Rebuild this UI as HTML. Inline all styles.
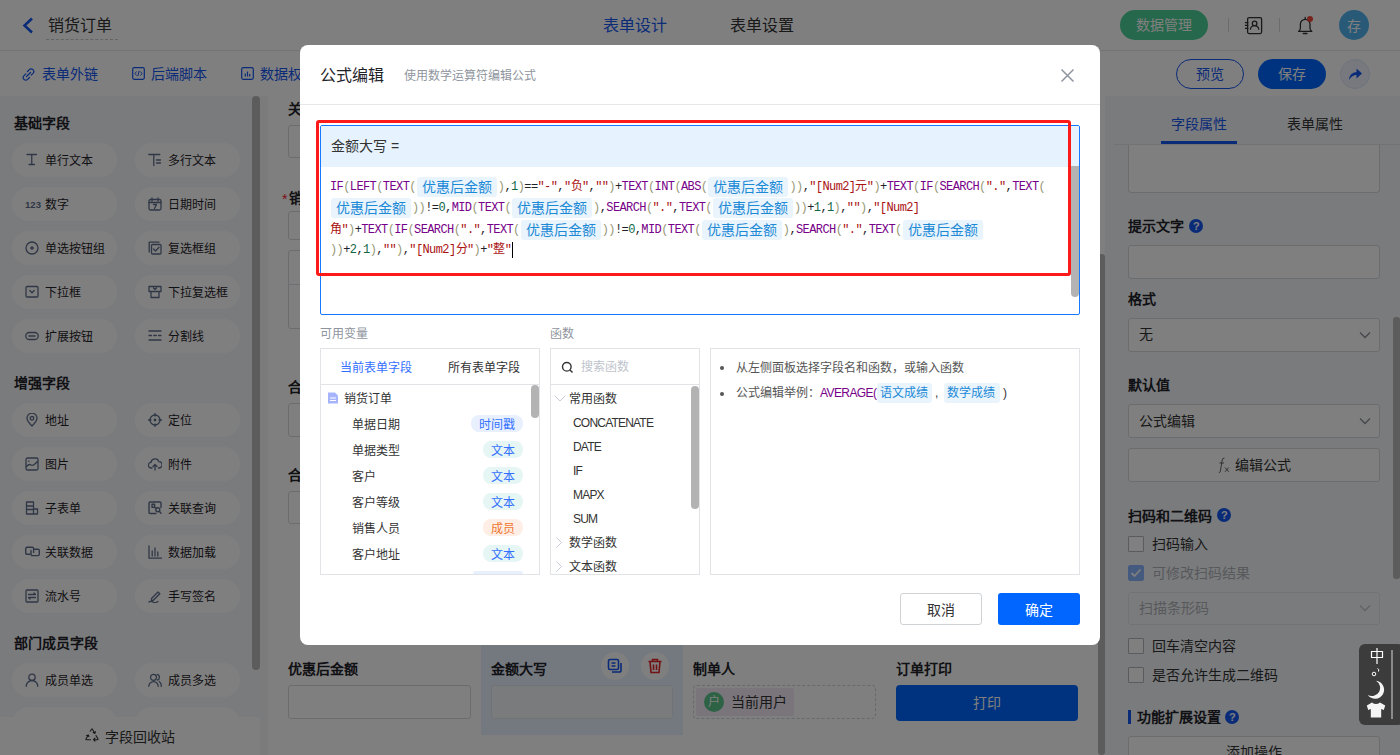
<!DOCTYPE html>
<html lang="zh-CN">
<head>
<meta charset="utf-8">
<style>
*{box-sizing:border-box;margin:0;padding:0}
html,body{width:1400px;height:755px;overflow:hidden;background:#fff;font-family:"Liberation Sans",sans-serif;color:#1f2329}
.a{position:absolute}
.t{position:absolute;white-space:nowrap;line-height:1}
/* header */
#hdr{left:0;top:0;width:1400px;height:51px;background:#fff;border-bottom:1px solid #e8e8e8}
#tb{left:0;top:51px;width:1400px;height:45px;background:#fff}
/* left */
#lp{left:0;top:96px;width:260px;height:659px;background:#f5f7fb}
.pill{position:absolute;width:105px;height:34px;border-radius:17px;background:#fff}
.pill span{position:absolute;left:33px;top:11px;font-size:12px;line-height:14px;white-space:nowrap;color:#1f2329}
.pill svg{position:absolute;left:13px;top:10px}
.sec{position:absolute;left:14px;font-size:14px;font-weight:bold;line-height:16px;color:#1f2329}
/* canvas */
#cv{left:268px;top:96px;width:837px;height:659px;background:#fff}
.lbl{position:absolute;font-size:14px;font-weight:bold;line-height:16px;white-space:nowrap}
.inp{position:absolute;border:1px solid #d6d8db;border-radius:3px;background:#fff}
/* right */
#rp{left:1105px;top:96px;width:295px;height:659px;background:#f5f7fb}
#mask{left:0;top:0;width:1400px;height:755px;background:rgba(0,0,0,0.5)}
/* modal */
#modal{left:300px;top:45px;width:800px;height:600px;background:#fff;border-radius:8px;overflow:hidden}
.mono{font-family:"Liberation Mono",monospace;font-size:12px;letter-spacing:-0.6px}
.fn{color:#770088}.br{color:#999977}.nm{color:#116644}.st{color:#aa1111}.op{color:#1f2329}
.chip{display:inline-block;position:relative;height:20px;line-height:20px;padding:0 5px;margin:0 1px;background:#e9f4fd;color:#1d8ad6;border-radius:3px;font-family:"Liberation Sans",sans-serif;font-size:14px;letter-spacing:0;vertical-align:middle}
.cl{position:absolute;left:330px;white-space:nowrap;height:20px;line-height:20px}
</style>
</head>
<body>
<!-- ===== HEADER ===== -->
<div id="hdr" class="a"></div>
<svg class="a" style="left:22px;top:17px" width="12" height="17" viewBox="0 0 12 17"><path d="M10 1.5 L2.5 8.5 L10 15.5" fill="none" stroke="#1456f0" stroke-width="2.6"/></svg>
<div class="t" style="left:48px;top:18px;font-size:16px;color:#333">销货订单</div>
<div class="a" style="left:46px;top:39px;width:72px;border-top:1px dashed #c8c8c8"></div>
<div class="t" style="left:603px;top:18px;font-size:16px;color:#1456f0">表单设计</div>
<div class="t" style="left:730px;top:18px;font-size:16px;color:#333">表单设置</div>
<div class="a" style="left:1120px;top:10px;width:88px;height:30px;border-radius:15px;background:#4cd096"></div>
<div class="t" style="left:1136px;top:18px;font-size:14px;color:#fff">数据管理</div>
<div class="a" style="left:1228px;top:18px;width:1px;height:14px;background:#d8d8d8"></div>
<svg class="a" style="left:1244px;top:16px" width="20" height="19" viewBox="0 0 20 19"><rect x="3.6" y="1.6" width="14" height="16" rx="1.5" fill="none" stroke="#333" stroke-width="1.3"/><circle cx="10.6" cy="7.4" r="2.3" fill="none" stroke="#333" stroke-width="1.3"/><path d="M6.4 13.7A4.2 4.1 0 0 1 14.8 13.7" fill="none" stroke="#333" stroke-width="1.3"/><path d="M0.9 6.6h3.5M0.9 9.4h3.5M0.9 12.3h3.5" stroke="#333" stroke-width="1.2"/></svg>
<div class="a" style="left:1279px;top:18px;width:1px;height:14px;background:#d8d8d8"></div>
<svg class="a" style="left:1296px;top:15px" width="19" height="21" viewBox="0 0 19 21"><path d="M2.6 16.4Q4.4 15.4 4.4 13V9.2A4.8 4.8 0 0 1 14 9.2V13Q14 15.4 15.8 16.4Z" fill="none" stroke="#333" stroke-width="1.3" stroke-linejoin="round"/><path d="M9.2 2.3V4.2M7.3 18.5H11" stroke="#333" stroke-width="1.3" stroke-linecap="round"/><circle cx="14" cy="3.9" r="3" fill="#f04438"/></svg>
<div class="a" style="left:1339px;top:10px;width:30px;height:30px;border-radius:15px;background:#50b4f0"></div>
<div class="t" style="left:1347px;top:19px;font-size:14px;color:#fff">存</div>
<div id="tb" class="a"></div>
<svg class="a" style="left:22px;top:68px" width="13" height="13" viewBox="0 0 13 13"><path d="M5.5 3.5 L7.3 1.7 a2.6 2.6 0 0 1 3.7 3.7 L9.2 7.2 M7.5 9.5 L5.7 11.3 a2.6 2.6 0 0 1 -3.7 -3.7 L3.8 5.8 M4.5 8.5 L8.5 4.5" fill="none" stroke="#1456f0" stroke-width="1.2" stroke-linecap="round"/></svg>
<div class="t" style="left:42px;top:67px;font-size:14px;color:#1456f0">表单外链</div>
<svg class="a" style="left:132px;top:67px" width="13" height="13" viewBox="0 0 13 13"><rect x="0.7" y="0.7" width="11.6" height="11.6" rx="1.5" fill="none" stroke="#1456f0" stroke-width="1.2"/><path d="M4.5 4.5 L3 6.5 L4.5 8.5 M8.5 4.5 L10 6.5 L8.5 8.5 M7.2 3.8 L5.8 9.2" fill="none" stroke="#1456f0" stroke-width="1"/></svg>
<div class="t" style="left:151px;top:67px;font-size:14px;color:#1456f0">后端脚本</div>
<svg class="a" style="left:241px;top:67px" width="13" height="13" viewBox="0 0 13 13"><rect x="0.7" y="0.7" width="11.6" height="11.6" rx="1.5" fill="none" stroke="#1456f0" stroke-width="1.2"/><path d="M4.3 9.5V6.5M6.5 9.5V4.5M8.7 9.5V7" stroke="#1456f0" stroke-width="1.2"/></svg>
<div class="t" style="left:260px;top:67px;font-size:14px;color:#1456f0">数据权限</div>
<div class="a" style="left:1176px;top:59px;width:68px;height:30px;border-radius:15px;border:1px solid #1456f0;background:#fff"></div>
<div class="t" style="left:1196px;top:67px;font-size:14px;color:#1456f0">预览</div>
<div class="a" style="left:1258px;top:59px;width:68px;height:30px;border-radius:15px;background:#0066ff"></div>
<div class="t" style="left:1278px;top:67px;font-size:14px;color:#fff">保存</div>
<div class="a" style="left:1340px;top:59px;width:30px;height:30px;border-radius:15px;background:#eef3fd;border:1px solid #dde6f7"></div>
<svg class="a" style="left:1347px;top:66px" width="16" height="16" viewBox="0 0 16 16"><path d="M2 14 Q2.5 6.5 9.5 6 V2.5 L15 7.5 L9.5 12.5 V9 Q5 9 2 14Z" fill="#1456f0"/></svg>
<div id="lp" class="a"></div>
<div class="sec" style="top:115px">基础字段</div>
<div class="sec" style="top:375px">增强字段</div>
<div class="sec" style="top:635px">部门成员字段</div>
<div class="pill" style="left:12px;top:143px"><svg width="14" height="14" viewBox="0 0 14 14"><path d="M2 1.5h9.5M6.75 1.5v10M4 11.5h5.5" fill="none" stroke="#5f6f8c" stroke-width="1.3" stroke-linecap="round" stroke-linejoin="round" stroke-width="1.6"/></svg><span>单行文本</span></div>
<div class="pill" style="left:135px;top:143px"><svg width="14" height="14" viewBox="0 0 14 14"><path d="M0.8 1.5h11M5.8 1.5v11M8.5 7h4M8.5 10h4" fill="none" stroke="#5f6f8c" stroke-width="1.3" stroke-linecap="round" stroke-linejoin="round" stroke-width="1.4"/></svg><span>多行文本</span></div>
<div class="pill" style="left:12px;top:187px"><svg width="16" height="14" viewBox="0 0 16 14"><text x="0" y="11" font-family="Liberation Sans" font-weight="bold" font-size="9.6" fill="#5f6f8c">123</text></svg><span>数字</span></div>
<div class="pill" style="left:135px;top:187px"><svg width="14" height="14" viewBox="0 0 14 14"><rect x="1" y="2.5" width="12" height="10.5" rx="1.5" fill="none" stroke="#5f6f8c" stroke-width="1.3" stroke-linecap="round" stroke-linejoin="round"/><path d="M1 5.5h12M4 1v3M10 1v3M5.5 7.5h3L6.5 11.5" fill="none" stroke="#5f6f8c" stroke-width="1.3" stroke-linecap="round" stroke-linejoin="round"/></svg><span>日期时间</span></div>
<div class="pill" style="left:12px;top:231px"><svg width="14" height="14" viewBox="0 0 14 14"><circle cx="7" cy="7" r="6" fill="none" stroke="#5f6f8c" stroke-width="1.3" stroke-linecap="round" stroke-linejoin="round"/><circle cx="7" cy="7" r="1.7" fill="#5f6f8c"/></svg><span>单选按钮组</span></div>
<div class="pill" style="left:135px;top:231px"><svg width="14" height="14" viewBox="0 0 14 14"><path d="M1.2 11V1.2H11" fill="none" stroke="#5f6f8c" stroke-width="1.3" stroke-linecap="round" stroke-linejoin="round"/><rect x="3.5" y="3.5" width="9.5" height="9.5" rx="1" fill="none" stroke="#5f6f8c" stroke-width="1.3" stroke-linecap="round" stroke-linejoin="round"/><path d="M5.5 8l2 2 3.5-3.8" fill="none" stroke="#5f6f8c" stroke-width="1.3" stroke-linecap="round" stroke-linejoin="round"/></svg><span>复选框组</span></div>
<div class="pill" style="left:12px;top:275px"><svg width="14" height="14" viewBox="0 0 14 14"><rect x="1" y="1.5" width="12" height="10.5" rx="1.2" fill="none" stroke="#5f6f8c" stroke-width="1.3" stroke-linecap="round" stroke-linejoin="round"/><path d="M4.8 5.5l2.2 2.2 2.2-2.2" fill="none" stroke="#5f6f8c" stroke-width="1.3" stroke-linecap="round" stroke-linejoin="round"/></svg><span>下拉框</span></div>
<div class="pill" style="left:135px;top:275px"><svg width="14" height="14" viewBox="0 0 14 14"><path d="M1 1.5h12v5H1zM3 6.5v6h8v-6M5.5 3l1.5 1.5L8.5 3" fill="none" stroke="#5f6f8c" stroke-width="1.3" stroke-linecap="round" stroke-linejoin="round"/></svg><span>下拉复选框</span></div>
<div class="pill" style="left:12px;top:319px"><svg width="14" height="14" viewBox="0 0 14 14"><rect x="0.8" y="3.5" width="12.4" height="7" rx="3.5" fill="none" stroke="#5f6f8c" stroke-width="1.3" stroke-linecap="round" stroke-linejoin="round"/><path d="M4 7h6" fill="none" stroke="#5f6f8c" stroke-width="1.3" stroke-linecap="round" stroke-linejoin="round"/></svg><span>扩展按钮</span></div>
<div class="pill" style="left:135px;top:319px"><svg width="14" height="14" viewBox="0 0 14 14"><path d="M1 2h12M1 6.5h2.5M5.8 6.5h2.5M10.5 6.5h2.5M1 11h12" fill="none" stroke="#5f6f8c" stroke-width="1.3" stroke-linecap="round" stroke-linejoin="round"/></svg><span>分割线</span></div>
<div class="pill" style="left:12px;top:403px"><svg width="14" height="14" viewBox="0 0 14 14"><path d="M7 13C3.5 9.5 2 7.3 2 5.2a5 5 0 0 1 10 0c0 2.1-1.5 4.3-5 7.8z" fill="none" stroke="#5f6f8c" stroke-width="1.3" stroke-linecap="round" stroke-linejoin="round"/><circle cx="7" cy="5.3" r="1.8" fill="none" stroke="#5f6f8c" stroke-width="1.3" stroke-linecap="round" stroke-linejoin="round"/></svg><span>地址</span></div>
<div class="pill" style="left:135px;top:403px"><svg width="14" height="14" viewBox="0 0 14 14"><circle cx="7" cy="7" r="5" fill="none" stroke="#5f6f8c" stroke-width="1.3" stroke-linecap="round" stroke-linejoin="round"/><circle cx="7" cy="7" r="1.4" fill="#5f6f8c"/><path d="M7 0.5v2.5M7 11v2.5M0.5 7H3M11 7h2.5" fill="none" stroke="#5f6f8c" stroke-width="1.3" stroke-linecap="round" stroke-linejoin="round"/></svg><span>定位</span></div>
<div class="pill" style="left:12px;top:447px"><svg width="14" height="14" viewBox="0 0 14 14"><rect x="1" y="1" width="12" height="12" rx="1.5" fill="none" stroke="#5f6f8c" stroke-width="1.3" stroke-linecap="round" stroke-linejoin="round"/><path d="M1.5 9.5Q4 6.5 6 8T12.5 4.5M3.5 4.2h.5" fill="none" stroke="#5f6f8c" stroke-width="1.3" stroke-linecap="round" stroke-linejoin="round"/></svg><span>图片</span></div>
<div class="pill" style="left:135px;top:447px"><svg width="14" height="14" viewBox="0 0 14 14"><path d="M4 11H3.3a2.8 2.8 0 0 1-.3-5.6A4 4 0 0 1 10.8 4.6 2.8 2.8 0 0 1 11 11h-.5M7 13V7.5M5 9.5l2-2 2 2" fill="none" stroke="#5f6f8c" stroke-width="1.3" stroke-linecap="round" stroke-linejoin="round"/></svg><span>附件</span></div>
<div class="pill" style="left:12px;top:491px"><svg width="14" height="14" viewBox="0 0 14 14"><path d="M1.5 1h7v12h-7zM1.5 5h7M1.5 8.5h7M8.5 8h4v5h-4" fill="none" stroke="#5f6f8c" stroke-width="1.3" stroke-linecap="round" stroke-linejoin="round"/></svg><span>子表单</span></div>
<div class="pill" style="left:135px;top:491px"><svg width="14" height="14" viewBox="0 0 14 14"><path d="M8 12.5H2.2A1.2 1.2 0 0 1 1 11.3V2.2A1.2 1.2 0 0 1 2.2 1h9.6A1.2 1.2 0 0 1 13 2.2V6.5" fill="none" stroke="#5f6f8c" stroke-width="1.4" stroke-linecap="round" stroke-linejoin="round"/><rect x="4" y="3.3" width="2.6" height="3" fill="none" stroke="#5f6f8c" stroke-width="1.4" stroke-linecap="round" stroke-linejoin="round"/><circle cx="9.8" cy="8.8" r="2" fill="none" stroke="#5f6f8c" stroke-width="1.4" stroke-linecap="round" stroke-linejoin="round"/><path d="M11.3 10.3l1.7 1.9M6.6 6.3l1.7 1" fill="none" stroke="#5f6f8c" stroke-width="1.4" stroke-linecap="round" stroke-linejoin="round"/></svg><span>关联查询</span></div>
<div class="pill" style="left:12px;top:535px"><svg width="15" height="14" viewBox="0 0 15 14"><path d="M5 9.3H2a1.3 1.3 0 0 1-1.3-1.3V3.6A1.3 1.3 0 0 1 2 2.3h5.3a1.3 1.3 0 0 1 1.3 1.3V7.5" fill="none" stroke="#5f6f8c" stroke-width="1.4" stroke-linecap="round" stroke-linejoin="round"/><path d="M9.5 4.2h3.5a1.3 1.3 0 0 1 1.3 1.3v3.8a1.3 1.3 0 0 1-1.3 1.3H7.3A1.3 1.3 0 0 1 6 9.3V5.5" fill="none" stroke="#5f6f8c" stroke-width="1.4" stroke-linecap="round" stroke-linejoin="round"/></svg><span>关联数据</span></div>
<div class="pill" style="left:135px;top:535px"><svg width="14" height="14" viewBox="0 0 14 14"><path d="M1 0.8v12.4h12.5M4.2 11V6M7 11V3M9.8 11V7" fill="none" stroke="#5f6f8c" stroke-width="1.3" stroke-linecap="round" stroke-linejoin="round"/></svg><span>数据加载</span></div>
<div class="pill" style="left:12px;top:579px"><svg width="14" height="14" viewBox="0 0 14 14"><rect x="1" y="1" width="12" height="12" rx="1" fill="none" stroke="#5f6f8c" stroke-width="1.3" stroke-linecap="round" stroke-linejoin="round"/><path d="M3.5 5.5h7L9 4M10.5 8.5h-7L5 10" fill="none" stroke="#5f6f8c" stroke-width="1.3" stroke-linecap="round" stroke-linejoin="round"/></svg><span>流水号</span></div>
<div class="pill" style="left:135px;top:579px"><svg width="14" height="14" viewBox="0 0 14 14"><path d="M3.5 9.5l6.5-6.5 1.8 1.8-6.5 6.5H3.5zM1 13q2-1.5 4 0t5-.5" fill="none" stroke="#5f6f8c" stroke-width="1.3" stroke-linecap="round" stroke-linejoin="round"/></svg><span>手写签名</span></div>
<div class="pill" style="left:12px;top:663px"><svg width="14" height="14" viewBox="0 0 14 14"><circle cx="7" cy="4.3" r="3.2" fill="none" stroke="#5f6f8c" stroke-width="1.3" stroke-linecap="round" stroke-linejoin="round"/><path d="M1.2 13.3a5.8 5.8 0 0 1 11.6 0" fill="none" stroke="#5f6f8c" stroke-width="1.3" stroke-linecap="round" stroke-linejoin="round"/></svg><span>成员单选</span></div>
<div class="pill" style="left:135px;top:663px"><svg width="14" height="14" viewBox="0 0 14 14"><circle cx="5.5" cy="4.3" r="3" fill="none" stroke="#5f6f8c" stroke-width="1.3" stroke-linecap="round" stroke-linejoin="round"/><path d="M0.8 13.3a4.7 4.7 0 0 1 9.4 0M9.2 1.4a3 3 0 0 1 0 5.8M11.2 8.5a5 5 0 0 1 2 4.8" fill="none" stroke="#5f6f8c" stroke-width="1.3" stroke-linecap="round" stroke-linejoin="round"/></svg><span>成员多选</span></div>
<div class="pill" style="left:12px;top:707px"></div>
<div class="pill" style="left:135px;top:707px"></div>
<div class="a" style="left:252px;top:96px;width:8px;height:574px;border-radius:4px;background:#b8b8b8"></div>
<div class="a" style="left:0;top:717px;width:260px;height:38px;background:#fff"></div>
<svg class="a" style="left:85px;top:728px" width="14" height="15" viewBox="0 0 14 15"><path d="M5.2 3.2L6.6 1.2Q7 .6 7.4 1.2l2.4 4M8.2 4.6l1.7.8.4-1.8M11 7.5l1.9 3.3q.3.7-.4.9H8.5M10 10.2l-1.5 1.5 1.5 1.4M5.5 11.7H1.5q-.8-.1-.4-.9l2.2-3.8M1.6 7.5l1.7-.6.6 1.7" fill="none" stroke="#333" stroke-width="1.1" stroke-linecap="round" stroke-linejoin="round"/></svg>
<div class="t" style="left:105px;top:730px;font-size:14px;color:#333">字段回收站</div>
<div id="cv" class="a"></div>
<div class="a" style="left:260px;top:96px;width:8px;height:659px;background:#f7f7f8"></div>
<div class="lbl" style="left:288px;top:101px">关联单据</div>
<div class="inp" style="left:288px;top:125px;width:182px;height:33px"></div>
<div class="t" style="left:282px;top:192px;font-size:14px;color:#f5222d">*</div>
<div class="lbl" style="left:289px;top:190px">销售单号</div>
<div class="inp" style="left:288px;top:211px;width:182px;height:29px"></div>
<div class="inp" style="left:288px;top:250px;width:182px;height:79px"></div>
<div class="a" style="left:288px;top:284px;width:182px;height:1px;background:#dcdfe6"></div>
<div class="lbl" style="left:288px;top:379px">合计金额</div>
<div class="inp" style="left:288px;top:403px;width:182px;height:34px"></div>
<div class="lbl" style="left:288px;top:467px">合计数量</div>
<div class="inp" style="left:288px;top:491px;width:182px;height:33px"></div>
<div class="lbl" style="left:288px;top:661px">优惠后金额</div>
<div class="inp" style="left:288px;top:685px;width:183px;height:34px"></div>
<div class="a" style="left:481px;top:600px;width:202px;height:135px;background:#e9f1ff"></div>
<div class="lbl" style="left:491px;top:661px">金额大写</div>
<div class="inp" style="left:491px;top:685px;width:182px;height:34px;background:#f5f7fa;border-color:#e4e7ed"></div>
<div class="a" style="left:601px;top:652px;width:28px;height:28px;border-radius:14px;background:#fff"></div>
<svg class="a" style="left:607px;top:658px" width="16" height="16" viewBox="0 0 16 16"><rect x="1.5" y="1.5" width="10" height="10" rx="1.5" fill="none" stroke="#1456f0" stroke-width="1.6"/><path d="M4.5 5h4M4.5 8h4M14 5v7.5a1.5 1.5 0 0 1-1.5 1.5H5" fill="none" stroke="#1456f0" stroke-width="1.6"/></svg>
<div class="a" style="left:641px;top:652px;width:28px;height:28px;border-radius:14px;background:#fff"></div>
<svg class="a" style="left:647px;top:658px" width="16" height="16" viewBox="0 0 16 16"><path d="M1.5 3.5h13M5.5 3.5V1.5h5v2M3 3.5l1 11h8l1-11M6.5 6.5v5.5M9.5 6.5v5.5" fill="none" stroke="#e5242b" stroke-width="1.6"/></svg>
<div class="lbl" style="left:693px;top:661px">制单人</div>
<div class="a" style="left:693px;top:685px;width:183px;height:34px;border:1px dashed #d0d3d9;border-radius:4px"></div>
<div class="a" style="left:696px;top:688px;width:98px;height:28px;background:#f3eaf7;border-radius:2px"></div>
<div class="a" style="left:704px;top:692px;width:20px;height:20px;border-radius:10px;background:#5bc58b"></div>
<div class="t" style="left:708px;top:696px;font-size:12px;color:#fff">户</div>
<div class="t" style="left:731px;top:695px;font-size:14px;color:#333">当前用户</div>
<div class="lbl" style="left:896px;top:661px">订单打印</div>
<div class="a" style="left:896px;top:685px;width:182px;height:36px;border-radius:4px;background:#0066ff"></div>
<div class="t" style="left:973px;top:696px;font-size:14px;color:#fff">打印</div>
<div class="a" style="left:1098px;top:254px;width:7px;height:501px;border-radius:3px;background:#b8b8b8"></div>
<div id="rp" class="a"></div>
<div class="t" style="left:1171px;top:117px;font-size:14px;color:#1456f0">字段属性</div>
<div class="t" style="left:1287px;top:117px;font-size:14px;color:#333">表单属性</div>
<div class="a" style="left:1114px;top:144px;width:286px;height:1px;background:#e4e6ea"></div>
<div class="a" style="left:1161px;top:141px;width:76px;height:3px;background:#1456f0"></div>
<div class="inp" style="left:1128px;top:145px;width:252px;height:48px;border-top:none;border-radius:0 0 4px 4px"></div>
<div class="lbl" style="left:1128px;top:218px">提示文字</div><div class="a" style="left:1189px;top:219px;width:14px;height:14px;border-radius:7px;background:#1456f0"></div><div class="t" style="left:1193px;top:221px;font-size:11px;font-weight:bold;color:#fff">?</div>
<div class="inp" style="left:1128px;top:245px;width:252px;height:34px"></div>
<div class="lbl" style="left:1128px;top:291px">格式</div>
<div class="inp" style="left:1128px;top:318px;width:252px;height:34px"></div>
<div class="t" style="left:1139px;top:327px;font-size:14px;color:#333">无</div><svg class="a" style="left:1359px;top:331px" width="12" height="8" viewBox="0 0 12 8"><path d="M1 1.5l5 5 5-5" fill="none" stroke="#8a8f97" stroke-width="1.3"/></svg>
<div class="lbl" style="left:1128px;top:377px">默认值</div>
<div class="inp" style="left:1128px;top:404px;width:252px;height:34px"></div>
<div class="t" style="left:1139px;top:414px;font-size:14px;color:#333">公式编辑</div><svg class="a" style="left:1359px;top:417px" width="12" height="8" viewBox="0 0 12 8"><path d="M1 1.5l5 5 5-5" fill="none" stroke="#8a8f97" stroke-width="1.3"/></svg>
<div class="inp" style="left:1128px;top:448px;width:252px;height:34px"></div>
<svg class="a" style="left:1218px;top:457px" width="12" height="16" viewBox="0 0 12 16"><path d="M6.5 1.2Q4.6 .8 4.2 3L2.3 14.5Q1.9 16 .8 15.3M1.5 6h4.5" fill="none" stroke="#555" stroke-width="0.9"/><path d="M7 10.5l3.8 4.3M10.8 10.5L7 14.8" fill="none" stroke="#555" stroke-width="0.9"/></svg>
<div class="t" style="left:1235px;top:458px;font-size:14px;color:#333">编辑公式</div>
<div class="lbl" style="left:1128px;top:508px">扫码和二维码</div><div class="a" style="left:1217px;top:508px;width:14px;height:14px;border-radius:7px;background:#1456f0"></div><div class="t" style="left:1221px;top:510px;font-size:11px;font-weight:bold;color:#fff">?</div>
<div class="a" style="left:1128px;top:536px;width:16px;height:16px;border-radius:1px;background:#fff;border:1px solid #b4b7bd"></div><div class="t" style="left:1152px;top:537px;font-size:14px;color:#333">扫码输入</div>
<div class="a" style="left:1128px;top:565px;width:16px;height:16px;border-radius:2px;background:#8ab4ff;border:1px solid #8ab4ff"></div><svg class="a" style="left:1130px;top:568px" width="12" height="10" viewBox="0 0 12 10"><path d="M1.5 5l3 3 6-6.5" fill="none" stroke="#fff" stroke-width="1.8"/></svg><div class="t" style="left:1152px;top:566px;font-size:14px;color:#b0b3b8">可修改扫码结果</div>
<div class="inp" style="left:1128px;top:592px;width:252px;height:33px;background:#f5f7fa;border-color:#e4e7ed"></div>
<div class="t" style="left:1139px;top:601px;font-size:14px;color:#b0b3b8">扫描条形码</div><svg class="a" style="left:1359px;top:604px" width="12" height="8" viewBox="0 0 12 8"><path d="M1 1.5l5 5 5-5" fill="none" stroke="#c0c4cc" stroke-width="1.3"/></svg>
<div class="a" style="left:1128px;top:638px;width:16px;height:16px;border-radius:1px;background:#fff;border:1px solid #b4b7bd"></div><div class="t" style="left:1152px;top:639px;font-size:14px;color:#333">回车清空内容</div>
<div class="a" style="left:1128px;top:667px;width:16px;height:16px;border-radius:1px;background:#fff;border:1px solid #b4b7bd"></div><div class="t" style="left:1152px;top:668px;font-size:14px;color:#333">是否允许生成二维码</div>
<div class="a" style="left:1128px;top:710px;width:3px;height:14px;background:#1456f0"></div>
<div class="lbl" style="left:1137px;top:709px">功能扩展设置</div><div class="a" style="left:1225px;top:710px;width:14px;height:14px;border-radius:7px;background:#1456f0"></div><div class="t" style="left:1229px;top:712px;font-size:11px;font-weight:bold;color:#fff">?</div>
<div class="inp" style="left:1128px;top:736px;width:252px;height:34px"></div>
<div class="t" style="left:1226px;top:745px;font-size:14px;color:#333">添加操作</div>
<div class="a" style="left:1393px;top:317px;width:7px;height:262px;border-radius:3px;background:#b8b8b8"></div>

<div id="mask" class="a"></div>

<!-- ===== MODAL ===== -->
<div id="modal" class="a"></div>
<div class="t" style="left:320px;top:68px;font-size:16px;color:#1f2329">公式编辑</div>
<div class="t" style="left:404px;top:70px;font-size:12px;color:#8f959e">使用数学运算符编辑公式</div>
<svg class="a" style="left:1060px;top:68px" width="15" height="15" viewBox="0 0 15 15"><path d="M1.5 1.5l12 12M13.5 1.5l-12 12" stroke="#8f959e" stroke-width="1.5"/></svg>
<div class="a" style="left:300px;top:104px;width:800px;height:1px;background:#e8e8e8"></div>
<div class="a" style="left:320px;top:125px;width:760px;height:190px;border:1px solid #1677ff;border-radius:2px;overflow:hidden"><div class="a" style="left:0;top:0;width:758px;height:41px;background:#e6f3fe"></div></div>
<div class="t" style="left:331px;top:139px;font-size:14px;color:#333">金额大写 =</div>
<div class="cl mono" style="top:177px"><span class="fn">IF</span><span class="br">(</span><span class="fn">LEFT</span><span class="br">(</span><span class="fn">TEXT</span><span class="br">(</span><span class="chip">优惠后金额</span><span class="br">)</span><span class="op">,</span><span class="nm">1</span><span class="br">)</span><span class="op">==</span><span class="st">"-"</span><span class="op">,</span><span class="st">"负"</span><span class="op">,</span><span class="st">""</span><span class="br">)</span><span class="op">+</span><span class="fn">TEXT</span><span class="br">(</span><span class="fn">INT</span><span class="br">(</span><span class="fn">ABS</span><span class="br">(</span><span class="chip">优惠后金额</span><span class="br">)</span><span class="br">)</span><span class="op">,</span><span class="st">"[Num2]元"</span><span class="br">)</span><span class="op">+</span><span class="fn">TEXT</span><span class="br">(</span><span class="fn">IF</span><span class="br">(</span><span class="fn">SEARCH</span><span class="br">(</span><span class="st">"."</span><span class="op">,</span><span class="fn">TEXT</span><span class="br">(</span></div>
<div class="cl mono" style="top:198px"><span class="chip">优惠后金额</span><span class="br">)</span><span class="br">)</span><span class="op">!=</span><span class="nm">0</span><span class="op">,</span><span class="fn">MID</span><span class="br">(</span><span class="fn">TEXT</span><span class="br">(</span><span class="chip">优惠后金额</span><span class="br">)</span><span class="op">,</span><span class="fn">SEARCH</span><span class="br">(</span><span class="st">"."</span><span class="op">,</span><span class="fn">TEXT</span><span class="br">(</span><span class="chip">优惠后金额</span><span class="br">)</span><span class="br">)</span><span class="op">+</span><span class="nm">1</span><span class="op">,</span><span class="nm">1</span><span class="br">)</span><span class="op">,</span><span class="st">""</span><span class="br">)</span><span class="op">,</span><span class="st">"[Num2]</span></div>
<div class="cl mono" style="top:220px"><span class="st">角"</span><span class="br">)</span><span class="op">+</span><span class="fn">TEXT</span><span class="br">(</span><span class="fn">IF</span><span class="br">(</span><span class="fn">SEARCH</span><span class="br">(</span><span class="st">"."</span><span class="op">,</span><span class="fn">TEXT</span><span class="br">(</span><span class="chip">优惠后金额</span><span class="br">)</span><span class="br">)</span><span class="op">!=</span><span class="nm">0</span><span class="op">,</span><span class="fn">MID</span><span class="br">(</span><span class="fn">TEXT</span><span class="br">(</span><span class="chip">优惠后金额</span><span class="br">)</span><span class="op">,</span><span class="fn">SEARCH</span><span class="br">(</span><span class="st">"."</span><span class="op">,</span><span class="fn">TEXT</span><span class="br">(</span><span class="chip">优惠后金额</span></div>
<div class="cl mono" style="top:240px"><span class="br">)</span><span class="br">)</span><span class="op">+</span><span class="nm">2</span><span class="op">,</span><span class="nm">1</span><span class="br">)</span><span class="op">,</span><span class="st">""</span><span class="br">)</span><span class="op">,</span><span class="st">"[Num2]分"</span><span class="br">)</span><span class="op">+</span><span class="st">"整"</span><span style="display:inline-block;width:1px;height:16px;background:#000;vertical-align:middle;margin-left:1px"></span></div>
<div class="a" style="left:1071px;top:166px;width:8px;height:131px;border-radius:0 0 4px 4px;background:#b3b3b3"></div>
<div class="a" style="left:316px;top:120px;width:755px;height:156px;border:3px solid #ff1a1a;border-radius:3px"></div>
<div class="t" style="left:320px;top:328px;font-size:12px;color:#8f959e">可用变量</div>
<div class="t" style="left:550px;top:328px;font-size:12px;color:#8f959e">函数</div>
<div class="a" style="left:320px;top:348px;width:220px;height:227px;border:1px solid #e1e3e6"></div>
<div class="a" style="left:321px;top:384px;width:218px;height:1px;background:#e1e3e6"></div>
<div class="t" style="left:340px;top:362px;font-size:12px;color:#3370ff">当前表单字段</div>
<div class="t" style="left:448px;top:362px;font-size:12px;color:#333">所有表单字段</div>
<svg class="a" style="left:327px;top:392px" width="12" height="12" viewBox="0 0 12 12"><path d="M1 0.5h7l3 3V11.5H1z" fill="#a6b5fb"/><path d="M3 6h6M3 8.5h6" stroke="#fff" stroke-width="1.2"/></svg>
<div class="t" style="left:344px;top:393px;font-size:12px;color:#333">销货订单</div>
<div class="t" style="left:352px;top:419px;font-size:12px;color:#333">单据日期</div><div class="a" style="left:471px;top:415px;width:52px;height:17px;border-radius:8px;background:#e8f0fe"></div><div class="t" style="left:471px;top:419px;width:52px;text-align:center;font-size:12px;color:#3370ff">时间戳</div><div class="t" style="left:352px;top:445px;font-size:12px;color:#333">单据类型</div><div class="a" style="left:483px;top:441px;width:40px;height:17px;border-radius:8px;background:#e6f6f5"></div><div class="t" style="left:483px;top:445px;width:40px;text-align:center;font-size:12px;color:#3370ff">文本</div><div class="t" style="left:352px;top:471px;font-size:12px;color:#333">客户</div><div class="a" style="left:483px;top:467px;width:40px;height:17px;border-radius:8px;background:#e6f6f5"></div><div class="t" style="left:483px;top:471px;width:40px;text-align:center;font-size:12px;color:#3370ff">文本</div><div class="t" style="left:352px;top:497px;font-size:12px;color:#333">客户等级</div><div class="a" style="left:483px;top:493px;width:40px;height:17px;border-radius:8px;background:#e6f6f5"></div><div class="t" style="left:483px;top:497px;width:40px;text-align:center;font-size:12px;color:#3370ff">文本</div><div class="t" style="left:352px;top:523px;font-size:12px;color:#333">销售人员</div><div class="a" style="left:483px;top:519px;width:40px;height:17px;border-radius:8px;background:#feeee6"></div><div class="t" style="left:483px;top:523px;width:40px;text-align:center;font-size:12px;color:#f0762e">成员</div><div class="t" style="left:352px;top:549px;font-size:12px;color:#333">客户地址</div><div class="a" style="left:483px;top:545px;width:40px;height:17px;border-radius:8px;background:#e6f6f5"></div><div class="t" style="left:483px;top:549px;width:40px;text-align:center;font-size:12px;color:#3370ff">文本</div><div class="a" style="left:473px;top:571px;width:50px;height:3px;border-radius:8px 8px 0 0;background:#e8f0fe"></div>
<div class="a" style="left:531px;top:385px;width:8px;height:33px;border-radius:4px;background:#b3b3b3"></div>
<div class="a" style="left:550px;top:348px;width:150px;height:227px;border:1px solid #e1e3e6"></div>
<div class="a" style="left:551px;top:384px;width:148px;height:1px;background:#e1e3e6"></div>
<svg class="a" style="left:561px;top:361px" width="13" height="13" viewBox="0 0 13 13"><circle cx="5.8" cy="5.8" r="4.3" fill="none" stroke="#333" stroke-width="1.4"/><path d="M9 9l2.5 2.5" stroke="#333" stroke-width="1.4"/></svg>
<div class="t" style="left:581px;top:361px;font-size:12px;color:#c0c4cc">搜索函数</div>
<svg class="a" style="left:554px;top:395px" width="12" height="7" viewBox="0 0 12 7"><path d="M0.5 0.5l5.5 5.5 5.5-5.5" fill="none" stroke="#c6cdd8" stroke-width="1"/></svg>
<div class="t" style="left:569px;top:393px;font-size:12px;color:#333">常用函数</div>
<div class="t" style="left:573px;top:417px;font-size:12px;letter-spacing:-0.8px;color:#333">CONCATENATE</div><div class="t" style="left:573px;top:441px;font-size:12px;letter-spacing:-0.8px;color:#333">DATE</div><div class="t" style="left:573px;top:465px;font-size:12px;letter-spacing:-0.8px;color:#333">IF</div><div class="t" style="left:573px;top:489px;font-size:12px;letter-spacing:-0.8px;color:#333">MAPX</div><div class="t" style="left:573px;top:513px;font-size:12px;letter-spacing:-0.8px;color:#333">SUM</div>
<svg class="a" style="left:556px;top:537px" width="6" height="11" viewBox="0 0 6 11"><path d="M0.5 0.5l5 5-5 5" fill="none" stroke="#c6cdd8" stroke-width="1"/></svg>
<div class="t" style="left:569px;top:537px;font-size:12px;color:#333">数学函数</div>
<svg class="a" style="left:556px;top:561px" width="6" height="11" viewBox="0 0 6 11"><path d="M0.5 0.5l5 5-5 5" fill="none" stroke="#c6cdd8" stroke-width="1"/></svg>
<div class="t" style="left:569px;top:561px;font-size:12px;color:#333">文本函数</div>
<div class="a" style="left:551px;top:575px;width:148px;height:70px;background:#fff"></div>
<div class="a" style="left:691px;top:386px;width:8px;height:123px;border-radius:4px;background:#b3b3b3"></div>
<div class="a" style="left:710px;top:348px;width:370px;height:227px;border:1px solid #e1e3e6"></div>
<div class="a" style="left:720px;top:366px;width:4px;height:4px;border-radius:2px;background:#555"></div>
<div class="t" style="left:736px;top:362px;font-size:12px;color:#555">从左侧面板选择字段名和函数，或输入函数</div>
<div class="a" style="left:720px;top:392px;width:4px;height:4px;border-radius:2px;background:#555"></div>
<div class="t" style="left:736px;top:387px;font-size:12px;color:#555">公式编辑举例：<span style="color:#770088;letter-spacing:-0.6px">AVERAGE(</span></div>
<div class="a" style="left:877px;top:383px;width:55px;height:20px;border-radius:3px;background:#e9f4fd"></div>
<div class="t" style="left:880px;top:387px;font-size:12px;color:#1d8ad6">语文成绩</div>
<div class="t" style="left:935px;top:387px;font-size:12px;color:#333">,</div>
<div class="a" style="left:944px;top:383px;width:56px;height:20px;border-radius:3px;background:#e9f4fd"></div>
<div class="t" style="left:947px;top:387px;font-size:12px;color:#1d8ad6">数学成绩</div>
<div class="t" style="left:1003px;top:387px;font-size:12px;color:#333">)</div>
<div class="a" style="left:900px;top:593px;width:82px;height:32px;border:1px solid #d0d3d6;border-radius:3px;background:#fff"></div>
<div class="t" style="left:927px;top:603px;font-size:14px;color:#333">取消</div>
<div class="a" style="left:998px;top:593px;width:82px;height:32px;border-radius:3px;background:#0066ff"></div>
<div class="t" style="left:1025px;top:603px;font-size:14px;color:#fff">确定</div>
<div class="a" style="left:1359px;top:644px;width:45px;height:81px;border-radius:6px;background:#3c3c3c"></div>
<svg class="a" style="left:1370px;top:647px" width="14" height="18" viewBox="0 0 14 18"><path d="M1.5 4.5h11v6h-11zM7 1v16" fill="none" stroke="#fff" stroke-width="1.2"/></svg>
<svg class="a" style="left:1371px;top:667px" width="10" height="10" viewBox="0 0 10 10"><circle cx="3" cy="7" r="1.8" fill="none" stroke="#fff" stroke-width="1"/><path d="M6.5 1.5q2 .5 1 3" fill="none" stroke="#fff" stroke-width="1"/></svg>
<svg class="a" style="left:1367px;top:680px" width="18" height="19" viewBox="0 0 18 19"><path d="M9 0.8A9 9 0 1 1 0.8 15 A7.5 7.5 0 0 0 9 0.8z" fill="#f5f5f5"/></svg>
<svg class="a" style="left:1366px;top:702px" width="20" height="16" viewBox="0 0 20 16"><path d="M6 0.5L0.8 3.5 2.2 8l2.6-1V15.5h10.4V7l2.6 1 1.4-4.5L14 0.5Q10 3.5 6 0.5z" fill="#f5f5f5"/></svg>
<div class="a" style="left:1391px;top:650px;width:2px;height:69px;background:#8a8a8a"></div>
</body>
</html>
